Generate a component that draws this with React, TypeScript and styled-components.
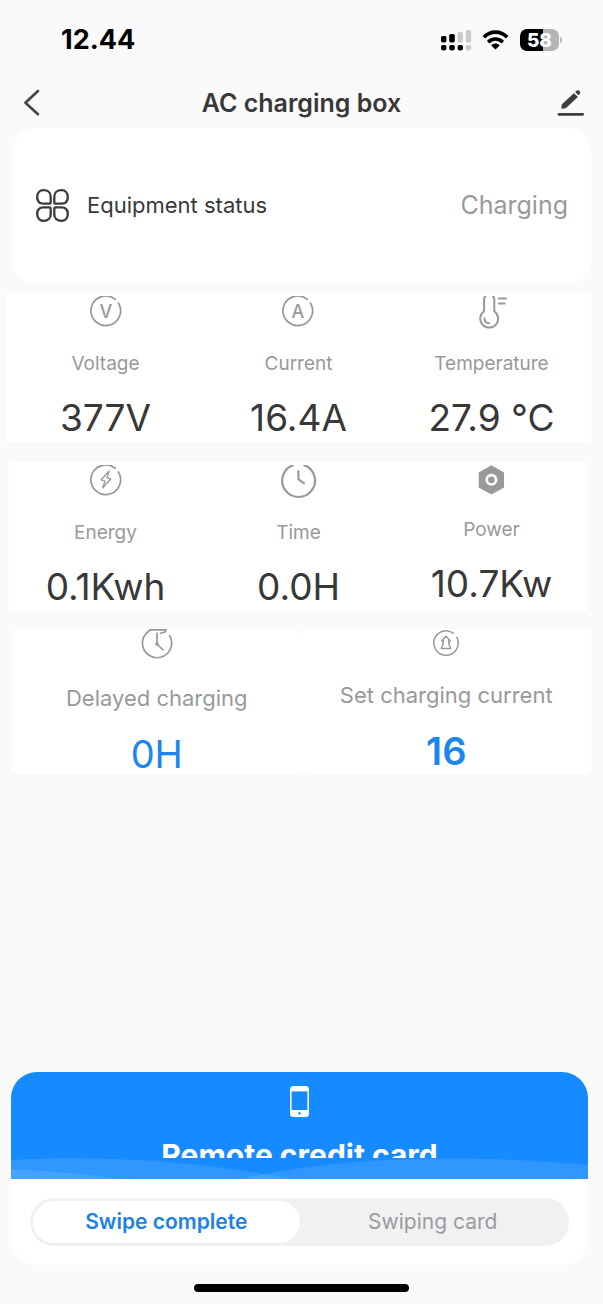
import React, { useState } from 'react';
import styled, { createGlobalStyle } from 'styled-components';

const GlobalStyle = createGlobalStyle`
  *, *::before, *::after { box-sizing: border-box; }
  body {
    margin: 0;
    background: #fafafa;
    color: #383838;
    font-family: Inter, "Liberation Sans", sans-serif;
  }
  button { font-family: inherit; border: 0; padding: 0; background: none; cursor: pointer; }
  svg { display: block; }
  h1, h2, p, dl, dd, dt { margin: 0; font-weight: 400; }
`;

const Screen = styled.div`
  min-height: 100vh;
  display: flex;
  flex-direction: column;
`;

const StatusBar = styled.div`
  height: 77px;
  padding: 3px 41px 0 61px;
  display: flex;
  align-items: center;
  justify-content: space-between;
`;

const Clock = styled.time`
  font-size: 27px;
  line-height: 32px;
  font-weight: 700;
  color: #000;
`;

const StatusIcons = styled.div`
  display: flex;
  align-items: center;
  gap: 10px;
`;

const Battery = styled.div`
  display: flex;
  align-items: center;
  gap: 1px;
  &::after {
    content: "";
    width: 2px;
    height: 6px;
    border-radius: 0 2px 2px 0;
    background: #b9b9b9;
  }
`;

const BatteryLevel = styled.span`
  width: 39px;
  height: 22px;
  border-radius: 7px;
  background: linear-gradient(to right, #000 58%, #b5b5b5 58%);
  color: #fff;
  font-size: 19px;
  line-height: 23px;
  font-weight: 800;
  text-align: center;
`;

const NavBar = styled.header`
  height: 51px;
  padding: 0 16px;
  display: grid;
  grid-template-columns: 30px 1fr 30px;
  align-items: center;
`;

const Title = styled.h1`
  font-size: 25px;
  line-height: 32px;
  font-weight: 600;
  text-align: center;
`;

const StatusCard = styled.section`
  margin: 0 12px;
  padding: 60px 23px;
  display: flex;
  align-items: center;
  gap: 17px;
  border-radius: 24px;
  background: #fff;
`;

const StatusName = styled.h2`
  flex: 1;
  font-size: 22px;
  line-height: 35px;
`;

const StatusValue = styled.p`
  font-size: 25px;
  line-height: 35px;
  color: #999;
`;

const Panel = styled.dl<{ $side: number; $gap: number }>`
  margin: ${(p) => p.$gap}px 15px 0 9px;
  display: grid;
  grid-template-columns: repeat(3, 1fr);
  background: #fff;
  box-shadow: -${(p) => p.$side}px 0 #fff, ${(p) => p.$side}px 0 #fff;
`;

const Metric = styled.div`
  padding-top: 3px;
  display: flex;
  flex-direction: column;
  align-items: center;
`;

const MetricLabel = styled.dt`
  display: flex;
  flex-direction: column;
  align-items: center;
  gap: 22px;
  font-size: 19px;
  line-height: 24px;
  color: #999;
`;

const MetricValue = styled.dd`
  margin-top: 18px;
  font-size: 37px;
  line-height: 48px;
`;

const Settings = styled.div`
  margin: 18px 12px 0;
  display: grid;
  grid-template-columns: repeat(2, 1fr);
`;

const Setting = styled.button`
  height: 145px;
  display: flex;
  flex-direction: column;
  align-items: center;
  border-radius: 6px;
  background: #fff;
`;

const SettingLabel = styled.span`
  margin-top: 21px;
  font-size: 22px;
  line-height: 28px;
  color: #999;
`;

const SettingValue = styled.span<{ $strong?: boolean }>`
  margin-top: 22px;
  font-size: 38px;
  line-height: 40px;
  font-weight: ${(p) => (p.$strong ? 600 : 400)};
  color: #1a86ee;
`;

const RemoteCard = styled.section`
  margin: auto 15px 0 11px;
  border-radius: 26px;
  background: #fff;
  overflow: hidden;
`;

const Banner = styled.div`
  position: relative;
  height: 107px;
  padding-top: 14px;
  display: flex;
  flex-direction: column;
  align-items: center;
  gap: 22px;
  background: #168bff;
`;

const BannerTitle = styled.h2`
  height: 19px;
  overflow: hidden;
  font-size: 30px;
  line-height: 32px;
  font-weight: 700;
  color: #fff;
`;

const Waves = styled.svg`
  position: absolute;
  left: 0;
  bottom: 0;
  width: 100%;
  height: 21px;
`;

const Segments = styled.div`
  margin: 19px;
  padding: 3px;
  height: 48px;
  display: grid;
  grid-template-columns: repeat(2, 1fr);
  border-radius: 24px;
  background: #f1f1f1;
`;

const Segment = styled.button<{ $active: boolean }>`
  border-radius: 21px;
  font-size: 21px;
  line-height: 28px;
  font-weight: ${(p) => (p.$active ? 600 : 400)};
  color: ${(p) => (p.$active ? '#1a82e6' : '#9a9ba2')};
  background: ${(p) => (p.$active ? '#fff' : 'transparent')};
`;

const HomeArea = styled.div`
  height: 39px;
  padding-top: 19px;
`;

const HomeIndicator = styled.div`
  width: 215px;
  height: 8px;
  margin: 0 auto;
  border-radius: 4px;
  background: #000;
`;

const IconButton = styled.button`
  width: 30px;
  height: 32px;
`;

const SignalIcon = () => (
  <svg width="31" height="22" viewBox="0 0 31 22" aria-hidden="true">
    <g fill="#000">
      <rect x="0" y="7" width="5.4" height="6.4" rx="1.6" />
      <rect x="8.2" y="5" width="5.6" height="8.4" rx="1.6" />
      <rect x="0" y="16" width="5.4" height="5.4" rx="1.8" />
      <rect x="8.2" y="16" width="5.6" height="5.4" rx="1.8" />
      <rect x="16.6" y="16" width="5.4" height="5.4" rx="1.8" />
    </g>
    <g fill="#cbcbcb">
      <rect x="16.6" y="3" width="5.4" height="10.4" rx="1.6" />
      <rect x="24.8" y="1" width="5.4" height="12.4" rx="1.6" />
      <rect x="24.8" y="16" width="5.4" height="5.4" rx="1.8" />
    </g>
  </svg>
);

const WifiIcon = () => (
  <svg width="28" height="22" viewBox="0 0 28 22" fill="none" stroke="#000" strokeWidth="3.6" aria-hidden="true">
    <path d="M1.8 8.2C8.4 1.4 18.6 1.4 25.2 8.2" />
    <path d="M6.2 13.2C10.2 9 16.8 9 20.8 13.2" />
    <path d="M13.5 20.6L9.2 16.4C11.6 13.8 15.4 13.8 17.8 16.4Z" fill="#000" stroke="none" />
  </svg>
);

const BackIcon = () => (
  <svg width="30" height="32" viewBox="0 0 30 32" fill="none" stroke="#444" strokeWidth="2.6" strokeLinecap="round" strokeLinejoin="round" aria-hidden="true">
    <path d="M22 4L9.4 15.7L22 27.2" />
  </svg>
);

const EditIcon = () => (
  <svg width="30" height="32" viewBox="0 0 30 32" aria-hidden="true">
    <path d="M4.9 21.2L5.4 17.8L17 7L20 10L8.6 20.6Z" fill="#3d3d3d" stroke="#3d3d3d" strokeWidth="1.2" strokeLinejoin="round" />
    <path d="M18.2 5L19.4 3.8C21.4 2 24.4 4.6 22.6 7L21.4 8.3Z" fill="#3d3d3d" />
    <path d="M2 27.3H25.6" stroke="#3d3d3d" strokeWidth="2.8" strokeLinecap="round" />
  </svg>
);

const LeavesIcon = () => (
  <svg width="35" height="35" viewBox="0 0 35 35" fill="none" stroke="#3a3a3a" strokeWidth="2.3" aria-hidden="true">
    <path d="M8.5 2.2C12.8 2.2 15.7 4.7 15.7 8.8V14.2C15.7 15 15.2 15.7 14.2 15.7H8.5C4.4 15.7 2.2 12.9 2.2 9C2.2 5 4.8 2.2 8.5 2.2Z" />
    <path d="M26.5 2.2C22.2 2.2 19.3 4.7 19.3 8.8V14.2C19.3 15 19.8 15.7 20.8 15.7H26.5C30.6 15.7 32.8 12.9 32.8 9C32.8 5 30.2 2.2 26.5 2.2Z" />
    <path d="M8.5 32.8C12.8 32.8 15.7 30.3 15.7 26.2V20.8C15.7 20 15.2 19.3 14.2 19.3H8.5C4.4 19.3 2.2 22.1 2.2 26C2.2 30 4.8 32.8 8.5 32.8Z" />
    <path d="M26.5 32.8C22.2 32.8 19.3 30.3 19.3 26.2V20.8C19.3 20 19.8 19.3 20.8 19.3H26.5C30.6 19.3 32.8 22.1 32.8 26C32.8 30 30.2 32.8 26.5 32.8Z" />
  </svg>
);

const MetricIcon = ({ height = 34, children }: { height?: number; children: React.ReactNode }) => (
  <svg width="36" height={height} viewBox={`0 0 36 ${height}`} fill="none" stroke="#999" strokeWidth="1.7" strokeLinecap="round" strokeLinejoin="round" aria-hidden="true">
    {children}
  </svg>
);

const OpenRing = () => <path d="M30.4 7A14.8 14.8 0 1 1 27.3 3.4" />;

const LetterIcon = ({ letter }: { letter: string }) => (
  <MetricIcon>
    <OpenRing />
    <text x="18" y="21.6" textAnchor="middle" fontSize="18" fontWeight="500" fill="#999" stroke="none">{letter}</text>
  </MetricIcon>
);

const ThermometerIcon = () => (
  <MetricIcon>
    <g strokeWidth="2">
      <path d="M11.4 0.4C10.4 1 10.1 2 10.1 3V15.2A9 9 0 1 0 20.3 15.2V3C20.3 2 20 1 19 0.4" />
      <path d="M10.4 22.2C10.6 25.2 12.4 27 15 27.2" />
      <path d="M24.8 2.6H32M24.8 7.6H30.6" />
    </g>
  </MetricIcon>
);

const BoltIcon = () => (
  <MetricIcon>
    <OpenRing />
    <path d="M21.2 6L13.2 14.8L17 16.2L14.6 23L22.8 13.8L19 12.6Z" strokeWidth="1.3" />
  </MetricIcon>
);

const TimeIcon = () => (
  <MetricIcon>
    <g strokeWidth="2.2">
      <path d="M12 0.2A16.4 16.4 0 1 0 23.2 0.2" />
      <path d="M17.4 6.4V14.2L23 18.4" />
    </g>
  </MetricIcon>
);

const PowerIcon = () => (
  <MetricIcon height={31}>
    <path d="M17.4 1.2L29.2 8V22L17.4 28.6L5.6 22V8Z" fill="#999" />
    <circle cx="17.4" cy="14.8" r="4.7" stroke="#fff" strokeWidth="2.6" />
  </MetricIcon>
);

const DelayIcon = () => (
  <MetricIcon>
    <path d="M30.6 6.6A14.6 14.6 0 1 1 20 -0.4M11 0.8H27L26 3L21.6 4.2" />
    <path d="M18 4V15L24 21" />
    <circle cx="18" cy="15" r="1" fill="#999" />
  </MetricIcon>
);

const CurrentIcon = () => (
  <MetricIcon height={31}>
    <path d="M28.8 8.4A12.2 12.2 0 1 1 25.2 4.2" strokeWidth="1.5" />
    <path d="M18 7.2L22.4 12H20.6C20.6 15 21 17 22.8 19.4H13.2C15 17 15.4 15 15.4 12H13.6Z" strokeWidth="1.5" />
  </MetricIcon>
);

const PhoneIcon = () => (
  <svg width="19" height="31" viewBox="0 0 19 31" aria-hidden="true">
    <rect width="19" height="31" rx="3.5" fill="#fff" />
    <rect x="1.6" y="5.4" width="15.8" height="18.6" fill="#168bff" />
    <circle cx="9.5" cy="27.2" r="1.2" fill="#168bff" />
  </svg>
);

type Reading = { label: string; value: string; icon: React.ReactNode };

const electrical: Reading[] = [
  { label: 'Voltage', value: '377V', icon: <LetterIcon letter="V" /> },
  { label: 'Current', value: '16.4A', icon: <LetterIcon letter="A" /> },
  { label: 'Temperature', value: '27.9 °C', icon: <ThermometerIcon /> },
];

const session: Reading[] = [
  { label: 'Energy', value: '0.1Kwh', icon: <BoltIcon /> },
  { label: 'Time', value: '0.0H', icon: <TimeIcon /> },
  { label: 'Power', value: '10.7Kw', icon: <PowerIcon /> },
];

const ReadingPanel = ({ readings, side, gap }: { readings: Reading[]; side: number; gap: number }) => (
  <Panel $side={side} $gap={gap}>
    {readings.map((r) => (
      <Metric key={r.label}>
        <MetricLabel>{r.icon}{r.label}</MetricLabel>
        <MetricValue>{r.value}</MetricValue>
      </Metric>
    ))}
  </Panel>
);

const swipeStates = ['Swipe complete', 'Swiping card'];

export default function App() {
  const [swipe, setSwipe] = useState(swipeStates[0]);
  return (
    <Screen>
      <GlobalStyle />
      <StatusBar>
        <Clock>12.44</Clock>
        <StatusIcons>
          <SignalIcon />
          <WifiIcon />
          <Battery><BatteryLevel>58</BatteryLevel></Battery>
        </StatusIcons>
      </StatusBar>
      <NavBar>
        <IconButton aria-label="Back"><BackIcon /></IconButton>
        <Title>AC charging box</Title>
        <IconButton aria-label="Edit"><EditIcon /></IconButton>
      </NavBar>
      <StatusCard>
        <LeavesIcon />
        <StatusName>Equipment status</StatusName>
        <StatusValue>Charging</StatusValue>
      </StatusCard>
      <ReadingPanel readings={electrical} side={3} gap={10} />
      <ReadingPanel readings={session} side={0} gap={20} />
      <Settings>
        <Setting>
          <DelayIcon />
          <SettingLabel>Delayed charging</SettingLabel>
          <SettingValue>0H</SettingValue>
        </Setting>
        <Setting>
          <CurrentIcon />
          <SettingLabel>Set charging current</SettingLabel>
          <SettingValue $strong>16</SettingValue>
        </Setting>
      </Settings>
      <RemoteCard>
        <Banner>
          <PhoneIcon />
          <BannerTitle>Remote credit card</BannerTitle>
          <Waves viewBox="0 0 577 21" preserveAspectRatio="none" fill="#fff" fillOpacity="0.11" aria-hidden="true">
            <path d="M0 2C90 -3 190 3 280 21H0Z" />
            <path d="M0 11C40 13 80 17 110 21H0Z" />
            <path d="M230 21C330 -2 460 -4 577 7V21Z" />
          </Waves>
        </Banner>
        <Segments role="group" aria-label="Card state">
          {swipeStates.map((s) => (
            <Segment key={s} $active={s === swipe} aria-pressed={s === swipe} onClick={() => setSwipe(s)}>{s}</Segment>
          ))}
        </Segments>
      </RemoteCard>
      <HomeArea><HomeIndicator /></HomeArea>
    </Screen>
  );
}
